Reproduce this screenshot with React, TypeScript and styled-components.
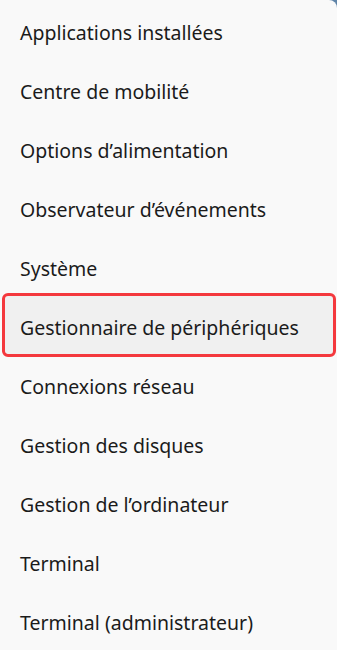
import React from "react";
import styled, { createGlobalStyle } from "styled-components";

const Global = createGlobalStyle`
  html, body { margin: 0; padding: 0; background: #5f84a8; }
  #root { width: 337px; height: 650px; }
`;

const Menu = styled.ul`
  list-style: none;
  margin: 0;
  padding: 3px 1px 0 2px;
  width: 337px;
  height: 650px;
  box-sizing: border-box;
  background: #f9f9f9;
  border-top-right-radius: 8px;
  overflow: hidden;
  display: flex;
  flex-direction: column;
`;

const Item = styled.li<{ $active?: boolean }>`
  height: 59px;
  flex: 0 0 59px;
  box-sizing: border-box;
  display: flex;
  align-items: center;
  padding-left: 18px;
  font-family: "Noto Sans", "Segoe UI", sans-serif;
  font-size: 19.5px;
  color: #1b1b1b;
  border-radius: 6px;
  ${(p) =>
    p.$active
      ? `
    flex-basis: 64px;
    height: 64px;
    margin-top: -5px;
    padding: 4px 0 0 15px;
    border: 3px solid #f4383d;
    background: #f0f0f0;`
      : ``}
`;

const items = [
  "Applications installées",
  "Centre de mobilité",
  "Options d’alimentation",
  "Observateur d’événements",
  "Système",
  "Gestionnaire de périphériques",
  "Connexions réseau",
  "Gestion des disques",
  "Gestion de l’ordinateur",
  "Terminal",
  "Terminal (administrateur)",
];

export default function App() {
  return (
    <>
      <Global />
      <Menu>
        {items.map((t, i) => (
          <Item key={t} $active={i === 5}>
            {t}
          </Item>
        ))}
      </Menu>
    </>
  );
}
